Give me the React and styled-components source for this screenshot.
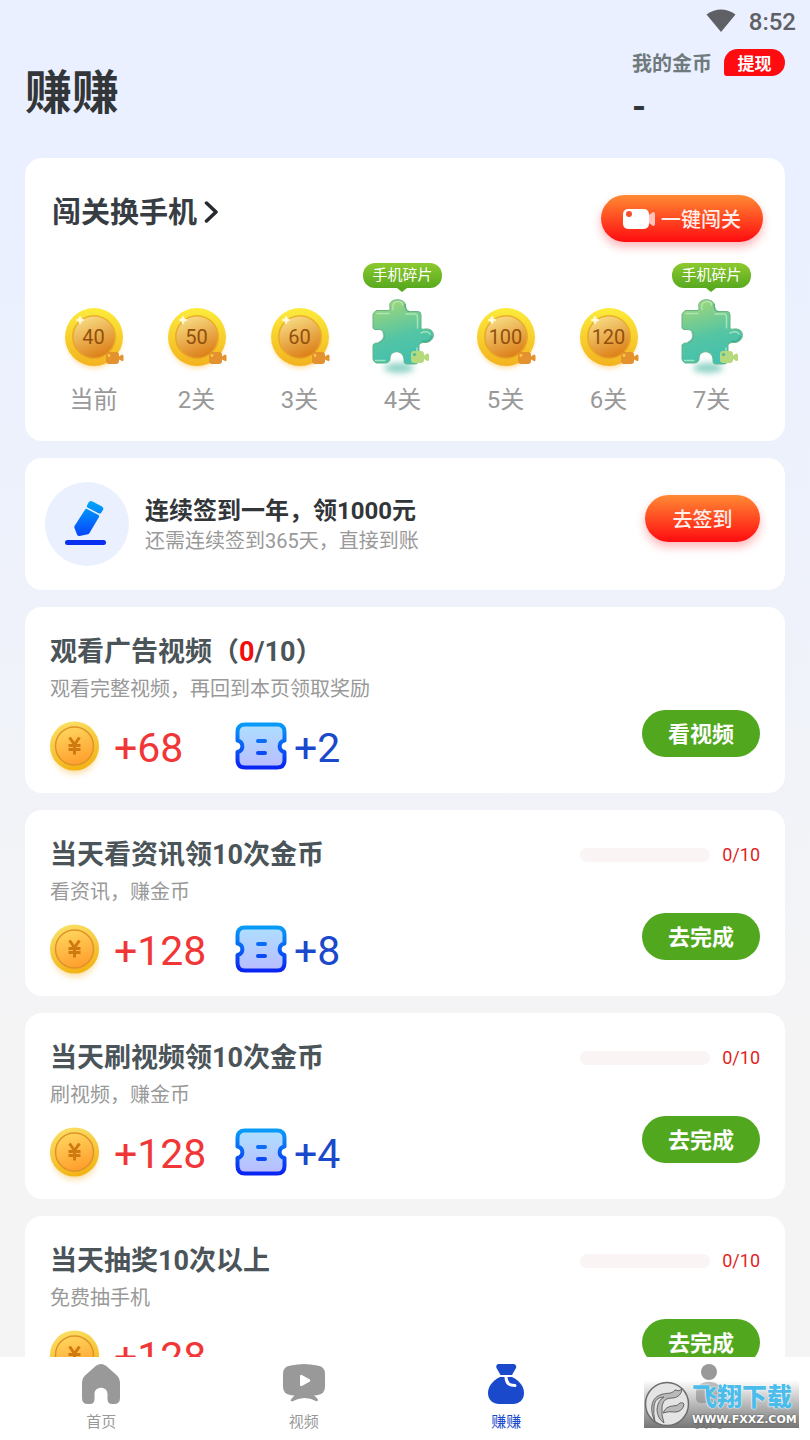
import React, { useState } from 'react'
import styled, { createGlobalStyle } from 'styled-components'

const LEVELS = [
  { label: '当前', coins: 40 },
  { label: '2关', coins: 50 },
  { label: '3关', coins: 60 },
  { label: '4关', tag: '手机碎片' },
  { label: '5关', coins: 100 },
  { label: '6关', coins: 120 },
  { label: '7关', tag: '手机碎片' },
]

const TASKS = [
  {
    id: 'ad',
    title: '观看广告视频',
    count: true,
    desc: '观看完整视频，再回到本页领取奖励',
    coins: 68,
    tickets: 2,
    action: '看视频',
    done: 0,
    total: 10,
  },
  {
    id: 'news',
    title: '当天看资讯领10次金币',
    desc: '看资讯，赚金币',
    coins: 128,
    tickets: 8,
    action: '去完成',
    done: 0,
    total: 10,
  },
  {
    id: 'video',
    title: '当天刷视频领10次金币',
    desc: '刷视频，赚金币',
    coins: 128,
    tickets: 4,
    action: '去完成',
    done: 0,
    total: 10,
  },
  {
    id: 'draw',
    title: '当天抽奖10次以上',
    desc: '免费抽手机',
    coins: 128,
    action: '去完成',
    done: 0,
    total: 10,
  },
]

const HomeIcon = () => (
  <svg width="38" height="40" viewBox="0 0 38 40" fill="currentColor">
    <path d="M14 1.8Q19 -1.6 24 1.8L35 11.4Q38 14 38 18V34Q38 40 32 40H30Q25.500 40 25.500 35V30C25.500 21.500 12.500 21.500 12.500 30V35Q12.500 40 8 40H6Q0 40 0 34V18Q0 14 3 11.400Z" />
  </svg>
)

const VideoIcon = () => (
  <svg width="42" height="40" viewBox="0 0 42 40" fill="currentColor">
    <path
      fillRule="evenodd"
      d="M8 1.600Q21 -1.400 34 1.600Q42 2.500 42 10V23Q42 30 34 31.200L31 31.600Q33.500 33.500 35 35.500Q35 37.500 33.500 37.200Q21 30.500 9 37.400Q7 37.500 8 35.500Q9.500 33.500 11.500 31.600L8 31.200Q0 30 0 23V10Q0 2.500 8 1.600ZM17 12.500V20.500Q17 23 19.300 21.800L26.500 17.800Q28 16.500 26.500 15.300L19.300 11.200Q17 10 17 12.500Z"
    />
  </svg>
)

const BagIcon = () => (
  <svg width="36" height="40" viewBox="0 0 36 40" fill="currentColor">
    <path d="M10 0H26Q29 1 28 4L24 11H12.500L8.500 4Q7.500 1 10 0Z" />
    <path d="M12 13H24C32 17 36 23 36 29C36 36 31 40 25 40H11C5 40 0 36 0 29C0 23 4 17 12 13Z" />
    <path
      d="M18 13C18 18.500 21 21.500 27 21.500"
      fill="none"
      stroke="#fff"
      strokeWidth="3"
      strokeLinecap="round"
    />
  </svg>
)

const MineIcon = () => (
  <svg width="38" height="40" viewBox="0 0 38 40" fill="currentColor">
    <circle cx="19" cy="8" r="8" />
    <path d="M6 34V29C6 14 32 14 32 29V34Q32 39 27 39H11Q6 39 6 34Z" opacity="0.6" />
  </svg>
)

const TABS = [
  { id: 'home', label: '首页', Icon: HomeIcon },
  { id: 'video', label: '视频', Icon: VideoIcon },
  { id: 'earn', label: '赚赚', Icon: BagIcon },
  { id: 'mine', label: '我的', Icon: MineIcon },
]

const CoinMedal = () => (
  <svg width="80" height="84" viewBox="0 0 80 84">
    <defs>
      <linearGradient id="medalRim" x1="0" y1="0" x2="0" y2="1">
        <stop offset="0" stopColor="#fcec3c" />
        <stop offset="1" stopColor="#f3b21f" />
      </linearGradient>
      <linearGradient id="medalFace" x1="0.25" y1="0" x2="0.65" y2="1">
        <stop offset="0" stopColor="#f8dd86" />
        <stop offset="1" stopColor="#dc7e16" />
      </linearGradient>
      <filter id="medalGlow" x="-30%" y="-30%" width="160%" height="160%">
        <feGaussianBlur stdDeviation="2.5" />
      </filter>
    </defs>
    <circle cx="40" cy="46" r="27" fill="#ffc65c" opacity="0.6" filter="url(#medalGlow)" />
    <circle cx="40" cy="42" r="29" fill="url(#medalRim)" />
    <circle cx="40" cy="42" r="22" fill="#e59c27" opacity="0.75" />
    <circle cx="40" cy="42" r="20.500" fill="url(#medalFace)" />
    <path d="M26 21Q26.500 24.500 30 25Q26.500 25.500 26 29Q25.500 25.500 22 25Q25.500 24.500 26 21Z" fill="#fffbe0" stroke="#fffbe0" />
    <rect x="52" y="57" width="13" height="12" rx="3" fill="#e4922d" />
    <path d="M65 61.500L68 59.500Q69.500 59.500 69.500 61V65Q69.500 66.500 68 66L65 64.500Z" fill="#e4922d" />
    <circle cx="55" cy="60.500" r="1.400" fill="#ffc840" />
  </svg>
)

const PuzzlePiece = () => (
  <svg width="80" height="84" viewBox="0 0 80 84">
    <defs>
      <linearGradient id="puzzleFill" x1="0.300" y1="0" x2="0.550" y2="1">
        <stop offset="0" stopColor="#a0d67a" />
        <stop offset="0.550" stopColor="#55c5a3" />
        <stop offset="1" stopColor="#41bfb0" />
      </linearGradient>
      <filter id="puzzleShade" x="-40%" y="-80%" width="180%" height="260%">
        <feGaussianBlur stdDeviation="3" />
      </filter>
    </defs>
    <ellipse cx="36" cy="73" rx="15" ry="5" fill="#5dbfac" opacity="0.7" filter="url(#puzzleShade)" />
    <path
      d="M13 15.500H25Q28 15 26.800 11.500C25 2.500 43.500 2.500 42.500 11.500Q42 15.500 45 16.500H55Q58 16.500 58 20V32.500Q59 35.500 62 34C73 32.500 73 46.500 63 47.500Q57 47 56 50V66.500Q54 69.500 51 69H42.500Q40.500 68 41 64C40 54.500 27.500 54.500 27 63Q27.500 67 23 68H13Q10 66 10 64V50Q11.500 47.500 14.500 48C24 46.500 24 33.500 14 34.500Q11 35.500 10 33V19Z"
      fill="url(#puzzleFill)"
      stroke="#66b583"
      strokeWidth="1"
    />
    <path
      d="M14 18.500H26M30 14.500C27.500 5.500 39.500 4 39.500 10M43 19H52Q54.500 19 54.500 23V33M58 38Q65 35 67 39M12.500 65.500H22M54 53V66"
      fill="none"
      stroke="#b8edc6"
      strokeWidth="1.500"
      strokeLinecap="round"
      opacity="0.75"
    />
    <path d="M42 9Q42 15 46 16.500M59 46Q66 48 69 41M16 47.500Q23 44 20 37" fill="none" stroke="#3ba184" strokeWidth="1.500" opacity="0.600" />
    <rect x="48" y="56" width="13" height="12" rx="3" fill="#b5da7e" />
    <path d="M61 60.500L64 58.500Q66 58 66 60V64.500Q66 66.500 64 66L61 64Z" fill="#b5da7e" />
    <circle cx="51.500" cy="59.500" r="1.600" fill="#46bba0" />
  </svg>
)

const GoldCoin = () => (
  <svg width="50" height="50" viewBox="0 0 50 50" overflow="visible">
    <defs>
      <linearGradient id="goldRim" x1="0.200" y1="0" x2="0.500" y2="1">
        <stop offset="0" stopColor="#fbe067" />
        <stop offset="1" stopColor="#f3b315" />
      </linearGradient>
      <linearGradient id="goldFace" x1="0.200" y1="0" x2="0.500" y2="1">
        <stop offset="0" stopColor="#ffd75e" />
        <stop offset="1" stopColor="#ff9f2e" />
      </linearGradient>
      <filter id="goldGlow" x="-30%" y="-30%" width="160%" height="160%">
        <feGaussianBlur stdDeviation="3" />
      </filter>
    </defs>
    <circle cx="25" cy="31" r="22" fill="#f7c96a" opacity="0.6" filter="url(#goldGlow)" />
    <circle cx="24.500" cy="25" r="24.500" fill="url(#goldRim)" />
    <circle cx="24.500" cy="25" r="19" fill="url(#goldFace)" stroke="#e0922a" strokeWidth="1.500" />
    <path
      d="M19.500 16.500L24.500 23.500L29.500 16.500M24.500 23V33.500M18.500 24.500H30.500M18.500 28.500H30.500"
      fill="none"
      stroke="#cf7a10"
      strokeWidth="3"
    />
  </svg>
)

const Ticket = () => (
  <svg width="52" height="48" viewBox="0 0 52 48">
    <defs>
      <linearGradient id="ticketEdge" x1="0" y1="0" x2="0" y2="1">
        <stop offset="0" stopColor="#089cf8" />
        <stop offset="1" stopColor="#0a24f2" />
      </linearGradient>
      <linearGradient id="ticketFill" x1="0" y1="0" x2="0" y2="1">
        <stop offset="0" stopColor="#aedfff" />
        <stop offset="1" stopColor="#b9bcff" />
      </linearGradient>
    </defs>
    <path
      d="M10 2.500H42Q49.500 2.500 49.500 10V18.500C43 20 43 28.500 49.500 30V38Q49.500 45.500 42 45.500H10Q2.500 45.500 2.500 38V30C9 28.500 9 20 2.500 18.500V10Q2.500 2.500 10 2.500Z"
      fill="url(#ticketFill)"
      stroke="url(#ticketEdge)"
      strokeWidth="4"
      strokeLinejoin="round"
    />
    <rect x="21" y="17" width="11" height="4" rx="2" fill="#0b6cf6" />
    <rect x="21" y="29" width="11" height="4" rx="2" fill="#0b4af4" />
  </svg>
)

const PenIcon = () => (
  <svg width="84" height="84" viewBox="0 0 84 84">
    <defs>
      <linearGradient id="penFill" gradientUnits="userSpaceOnUse" x1="0" y1="19" x2="0" y2="54">
        <stop offset="0" stopColor="#00a8fb" />
        <stop offset="1" stopColor="#0744fb" />
      </linearGradient>
    </defs>
    <path
      d="M43.500 20.500Q45 18 47.500 19.500L57 24.500Q59 26 58 28L56 31Q55 32 53.500 31.300L42.500 25.500Q41.500 24.500 42 23.500Z"
      fill="url(#penFill)"
    />
    <path
      d="M40.500 27Q41 26.500 42 27L53.500 33Q54.500 33.500 54 35L44.500 51Q44 52 43 52.300L34.500 54Q32.500 54 32 52.500L29.500 46Q29 45 29.500 44Z"
      fill="url(#penFill)"
    />
    <rect x="20" y="58" width="41" height="5" rx="2.500" fill="#0b2ff0" />
  </svg>
)

const Watermark = () => (
  <WatermarkBox>
    <svg width="46" height="48" viewBox="0 0 46 48">
      <circle cx="23" cy="24" r="21.500" fill="#e4e4e4" stroke="#6c6c6c" strokeWidth="1.500" />
      <path
        d="M11 42C6 31 6 19 16 15C23 12 27 15 31 10Q35 12 38 9Q37 17 29 18C21 18 19 21 18 27Q17 35 20 43Q13 38 13 29Q14 20 20 17Q11 17 10 26Q9 33 11 42Z"
        fill="#b9b9b9"
        stroke="#666"
      />
      <path
        d="M19 33Q22 26 29 26Q34 26 36 23Q39 22 40 24Q39 31 32 32Q24 31 19 33Z"
        fill="#b9b9b9"
        stroke="#666"
      />
    </svg>
    <WatermarkText>
      <WatermarkName>飞翔下载</WatermarkName>
      <WatermarkSite>WWW.FXXZ.COM</WatermarkSite>
    </WatermarkText>
  </WatermarkBox>
)

const Level = ({ label, coins, tag }) => (
  <LevelItem>
    <TagSlot>{tag && <Tag>{tag}</Tag>}</TagSlot>
    <Medal>
      {tag ? <PuzzlePiece /> : <CoinMedal />}
      {coins && <MedalValue>{coins}</MedalValue>}
    </Medal>
    <LevelLabel>{label}</LevelLabel>
  </LevelItem>
)

const Task = ({ task }) => (
  <TaskCard>
    <TaskInfo>
      <TaskTitle>
        {task.title}
        {task.count && (
          <>
            （<Done>{task.done}</Done>/{task.total}）
          </>
        )}
      </TaskTitle>
      <TaskDesc>{task.desc}</TaskDesc>
      <Rewards>
        <Reward $color="#f03636" $gap={14}>
          <GoldCoin />
          <Amount>+{task.coins}</Amount>
        </Reward>
        {task.tickets && (
          <Reward $color="#1b49cc" $gap={7}>
            <Ticket />
            <Amount>+{task.tickets}</Amount>
          </Reward>
        )}
      </Rewards>
    </TaskInfo>
    <TaskSide>
      {!task.count && (
        <Progress>
          <Track>
            <Bar style={{ width: `${(task.done / task.total) * 100}%` }} />
          </Track>
          {task.done}/{task.total}
        </Progress>
      )}
      <TaskButton type="button">{task.action}</TaskButton>
    </TaskSide>
  </TaskCard>
)

const App = () => {
  const [active, setActive] = useState('earn')

  return (
    <>
      <GlobalStyle />
      <Screen>
        <StatusBar>
          <svg width="30" height="24" viewBox="0 0 30 24">
            <path d="M0.500 5.500Q15 -4.500 29.500 5.500L15 23Z" fill="#5f6065" />
          </svg>
          <Clock>8:52</Clock>
        </StatusBar>
        <Content>
          <Header>
            <PageTitle>赚赚</PageTitle>
            <Balance>
              <BalanceRow>
                我的金币
                <Withdraw type="button">提现</Withdraw>
              </BalanceRow>
              <BalanceValue>-</BalanceValue>
            </Balance>
          </Header>
          <Cards>
            <LevelCard>
              <LevelHead>
                <LevelTitle href="#levels">
                  闯关换手机
                  <svg width="16" height="24" viewBox="0 0 16 24">
                    <path
                      d="M2.500 2L12 11L2.500 20"
                      fill="none"
                      stroke="#26292e"
                      strokeWidth="3.500"
                      strokeLinecap="round"
                      strokeLinejoin="round"
                    />
                  </svg>
                </LevelTitle>
                <HotButton type="button" $width={162}>
                  <svg width="33" height="22" viewBox="0 0 33 22">
                    <rect x="0" y="1" width="26" height="20" rx="5" fill="#fff" />
                    <path d="M26 7L30 4Q32 4 32 6V16Q32 18 30 18L26 15Z" fill="#ffc2bc" />
                    <circle cx="6" cy="6" r="3" fill="#f4502a" />
                  </svg>
                  一键闯关
                </HotButton>
              </LevelHead>
              <LevelList>
                {LEVELS.map(level => (
                  <Level key={level.label} {...level} />
                ))}
              </LevelList>
            </LevelCard>

            <SignCard>
              <SignIcon>
                <PenIcon />
              </SignIcon>
              <SignText>
                <SignTitle>连续签到一年，领1000元</SignTitle>
                <SignDesc>还需连续签到365天，直接到账</SignDesc>
              </SignText>
              <SignAction>
                <HotButton type="button" $width={115}>
                  去签到
                </HotButton>
              </SignAction>
            </SignCard>

            {TASKS.map(task => (
              <Task key={task.id} task={task} />
            ))}
          </Cards>
        </Content>
        <TabBar>
          {TABS.map(({ id, label, Icon }) => (
            <Tab key={id} type="button" $active={id === active} onClick={() => setActive(id)}>
              <Icon />
              {label}
            </Tab>
          ))}
        </TabBar>
        <Watermark />
      </Screen>
    </>
  )
}

const GlobalStyle = createGlobalStyle`
  * {
    box-sizing: border-box;
  }
  body {
    margin: 0;
    font-family: Roboto, 'Noto Sans CJK SC', sans-serif;
  }
  h1, h2, p, ul {
    margin: 0;
    padding: 0;
  }
  button {
    padding: 0;
    border: 0;
    font-family: inherit;
    cursor: pointer;
  }
  svg {
    flex-shrink: 0;
  }
`
const Screen = styled.div`
  position: relative;
  display: flex;
  flex-direction: column;
  height: 100vh;
  background: linear-gradient(#eaf0ff, #eaf0ff 15%, #f4f4f5 72%);
`
const StatusBar = styled.div`
  display: flex;
  flex-shrink: 0;
  align-items: center;
  justify-content: flex-end;
  gap: 13px;
  height: 41px;
  padding: 0 14px;
`
const Clock = styled.span`
  padding-top: 3px;
  font-size: 24px;
  font-weight: 500;
  color: #5f6065;
`
const Content = styled.main`
  flex: 1;
  min-height: 0;
  overflow: hidden;
`
const Header = styled.header`
  display: flex;
  justify-content: space-between;
  height: 117px;
  padding: 0 25px;
`
const PageTitle = styled.h1`
  font-size: 47px;
  line-height: 104px;
  font-weight: 700;
  color: #323639;
`
const Balance = styled.div`
  color: #323639;
`
const BalanceRow = styled.div`
  display: flex;
  align-items: center;
  gap: 12px;
  height: 43px;
  font-size: 20px;
  font-weight: 700;
  color: #707a7c;
`
const Withdraw = styled.button`
  width: 61px;
  height: 27px;
  border-radius: 14px 14px 14px 3px;
  background: #ff0c10;
  color: #fff;
  font-size: 17px;
  font-weight: 700;
`
const BalanceValue = styled.div`
  font-size: 36px;
  line-height: 46px;
  font-weight: 700;
`
const Cards = styled.div`
  display: flex;
  flex-direction: column;
  gap: 17px;
  padding: 0 25px 17px;
`
const Card = styled.section`
  border-radius: 17px;
  background: #fff;
`
const LevelCard = styled(Card)`
  padding: 37px 22px 19px 17px;
`
const LevelHead = styled.div`
  display: flex;
  align-items: flex-start;
  justify-content: space-between;
  padding-left: 10px;
`
const LevelTitle = styled.a`
  display: flex;
  align-items: center;
  gap: 7px;
  font-size: 29px;
  line-height: 36px;
  font-weight: 700;
  color: #383d44;
  text-decoration: none;
`
const HotButton = styled.button`
  display: flex;
  flex-shrink: 0;
  align-items: center;
  justify-content: center;
  gap: 5px;
  width: ${({ $width }) => $width}px;
  height: 47px;
  border-radius: 24px;
  background: linear-gradient(#ff8a33, #ff0b10);
  box-shadow: 0 5px 10px rgba(255, 20, 30, 0.3);
  color: #ffeeea;
  font-size: 20px;
  font-weight: 500;
`
const LevelList = styled.ul`
  display: grid;
  grid-template-columns: repeat(7, 1fr);
  margin-top: 21px;
  list-style: none;
`
const LevelItem = styled.li`
  display: flex;
  flex-direction: column;
  align-items: center;
`
const TagSlot = styled.div`
  height: 32px;
`
const Tag = styled.div`
  position: relative;
  padding: 0 9px;
  border-radius: 12px;
  background: linear-gradient(#8cc92f, #58a91f);
  color: #fff;
  font-size: 15px;
  line-height: 25px;
  white-space: nowrap;

  &::after {
    content: '';
    position: absolute;
    top: 100%;
    left: 50%;
    margin-left: -5px;
    border: 5px solid transparent;
    border-bottom-width: 0;
    border-top: 4px solid #58a91f;
  }
`
const Medal = styled.div`
  display: grid;
  place-items: center;

  > * {
    grid-area: 1 / 1;
  }
`
const MedalValue = styled.span`
  z-index: 1;
  font-size: 20px;
  color: #92500f;
`
const LevelLabel = styled.div`
  font-size: 24px;
  line-height: 43px;
  color: #999;
`
const SignCard = styled(Card)`
  display: flex;
  align-items: flex-start;
  padding: 24px 25px 24px 20px;
`
const SignIcon = styled.div`
  display: flex;
  border-radius: 50%;
  background: #eaf0fd;
`
const SignText = styled.div`
  flex: 1;
  padding: 14px 0 0 16px;
`
const SignAction = styled.div`
  padding-top: 13px;
`
const SignTitle = styled.h2`
  font-size: 24px;
  line-height: 30px;
  font-weight: 700;
  color: #323639;
`
const SignDesc = styled.p`
  font-size: 20px;
  line-height: 30px;
  color: #999;
`
const TaskCard = styled(Card)`
  display: flex;
  justify-content: space-between;
  padding: 27px 25px 10px;
`
const TaskInfo = styled.div`
  min-width: 0;
`
const TaskTitle = styled.h2`
  font-size: 27px;
  line-height: 36px;
  font-weight: 700;
  color: #4a5459;
`
const Done = styled.span`
  color: #f40b0b;
`
const TaskDesc = styled.p`
  font-size: 20px;
  line-height: 38px;
  color: #999;
`
const Rewards = styled.div`
  display: grid;
  grid-template-columns: 185px auto;
  height: 75px;
`
const Reward = styled.div`
  display: flex;
  align-items: center;
  gap: ${({ $gap }) => $gap}px;
  color: ${({ $color }) => $color};
`
const Amount = styled.span`
  padding-top: 5px;
  font-size: 41px;
`
const TaskSide = styled.div`
  display: flex;
  flex-direction: column;
  align-items: flex-end;
  padding-bottom: 26px;
`
const Progress = styled.div`
  display: flex;
  align-items: center;
  gap: 12px;
  font-size: 18px;
  line-height: 36px;
  color: #e01f1f;
`
const Track = styled.div`
  width: 130px;
  height: 14px;
  border-radius: 7px;
  background: #faf4f4;
  overflow: hidden;
`
const Bar = styled.div`
  height: 100%;
  background: #e01f1f;
`
const TaskButton = styled.button`
  width: 118px;
  height: 47px;
  margin-top: auto;
  padding-bottom: 3px;
  border-radius: 24px;
  background: #51a81f;
  color: #fff;
  font-size: 22px;
  font-weight: 700;
`
const TabBar = styled.nav`
  display: grid;
  flex-shrink: 0;
  grid-template-columns: repeat(4, 1fr);
  height: 83px;
  background: #fff;
`
const Tab = styled.button`
  display: flex;
  flex-direction: column;
  align-items: center;
  padding-top: 7px;
  background: none;
  color: ${({ $active }) => ($active ? '#1b49cc' : '#999')};
  font-size: 15px;
  line-height: 36px;
`
const WatermarkBox = styled.div`
  position: absolute;
  right: 11px;
  bottom: 12px;
  display: flex;
  width: 155px;
  height: 48px;
  background: linear-gradient(rgba(120, 120, 120, 0), rgba(110, 110, 110, 0.95));
  pointer-events: none;
`
const WatermarkText = styled.div`
  display: flex;
  flex-direction: column;
  justify-content: flex-end;
  padding: 0 0 1px 2px;
  white-space: nowrap;
`
const WatermarkName = styled.span`
  font-size: 25px;
  line-height: 30px;
  font-weight: 900;
  color: #4cbdea;
  text-shadow: 0 0 2px #fff, 0 0 1px #fff;
`
const WatermarkSite = styled.span`
  font-family: 'DejaVu Sans', sans-serif;
  font-size: 11px;
  line-height: 14px;
  font-weight: 700;
  color: #fff;
  text-shadow: 0 0 2px #444;
`

export default App
